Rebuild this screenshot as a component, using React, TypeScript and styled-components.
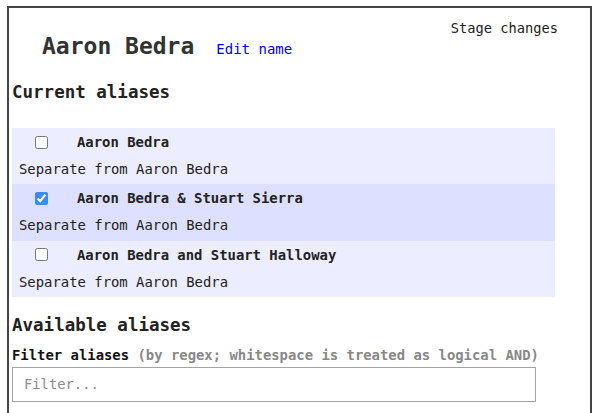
import React, { useState } from 'react'
import styled, { createGlobalStyle } from 'styled-components'

const GlobalStyle = createGlobalStyle`
  html, body {
    margin: 0;
    padding: 0;
    background: #fff;
  }
  body {
    font-family: "DejaVu Sans Mono", "Liberation Mono", monospace;
    font-size: 13.9px;
    color: #222;
  }
`

const Frame = styled.div`
  box-sizing: border-box;
  width: 585px;
  min-height: 420px;
  margin: 6px 0 0 7px;
  padding: 0 3px;
  border: 2px solid #444;
  border-bottom: none;
`

const Header = styled.div`
  display: flex;
  justify-content: space-between;
  align-items: flex-start;
`

const TitleRow = styled.div`
  display: flex;
  align-items: baseline;
  gap: 22px;
  height: 28px;
  margin-top: 24px;
  padding-left: 30px;
`

const Title = styled.h1`
  margin: 0;
  font-size: 23px;
  line-height: 28px;
  font-weight: bold;
  color: #333;
`

const EditLink = styled.a`
  font-size: 14px;
  line-height: 16px;
  color: #0000ee;
  text-decoration: none;
  cursor: pointer;
`

const StageButton = styled.button`
  margin: 12px 29px 0 0;
  padding: 0;
  border: none;
  background: none;
  font-family: inherit;
  font-size: 13.7px;
  line-height: 16px;
  color: #222;
  cursor: pointer;
`

const SectionTitle = styled.h2<{ $top: number; $bottom: number }>`
  margin: ${(p) => p.$top}px 0 ${(p) => p.$bottom}px;
  font-size: 17.5px;
  line-height: 22px;
  font-weight: bold;
  color: #222;
`

const AliasList = styled.div`
  width: 543px;
  display: flex;
  flex-direction: column;
`

const AliasRow = styled.div<{ $selected: boolean }>`
  display: flex;
  flex-direction: column;
  gap: 7px;
  padding: 4px 0 5.33px;
  background: ${(p) => (p.$selected ? '#dde0fe' : '#ecedfe')};
`

const AliasLine = styled.label`
  display: flex;
  align-items: center;
  line-height: 20px;
  cursor: pointer;
`

const Check = styled.input`
  width: 13px;
  height: 13px;
  margin: 0 29px 0 23px;
  accent-color: #3d8af7;
`

const AliasName = styled.span`
  font-weight: bold;
  color: #222;
`

const SeparateText = styled.div`
  padding-left: 7px;
  line-height: 20px;
  color: #222;
`

const FilterLabel = styled.div`
  margin-top: 11px;
  line-height: 17px;
  font-weight: bold;
  color: #111;
`

const Hint = styled.span`
  color: #888;
`

const FilterInput = styled.input`
  box-sizing: border-box;
  display: block;
  width: 524px;
  height: 35px;
  margin-top: 3px;
  padding: 0 11px;
  border: 1px solid #a3a3a3;
  border-radius: 0;
  font-family: inherit;
  font-size: 13.8px;
  color: #222;
  outline: none;
  &::placeholder {
    color: #8a8a8a;
  }
`

const aliases = [
  'Aaron Bedra',
  'Aaron Bedra & Stuart Sierra',
  'Aaron Bedra and Stuart Halloway',
]

export default function App() {
  const [checked, setChecked] = useState<boolean[]>([false, true, false])
  const [filter, setFilter] = useState('')

  const toggle = (i: number) =>
    setChecked((c) => c.map((v, j) => (j === i ? !v : v)))

  return (
    <>
      <GlobalStyle />
      <Frame>
        <Header>
          <TitleRow>
            <Title>Aaron Bedra</Title>
            <EditLink>Edit name</EditLink>
          </TitleRow>
          <StageButton>Stage changes</StageButton>
        </Header>

        <SectionTitle $top={21} $bottom={25}>Current aliases</SectionTitle>
        <AliasList>
          {aliases.map((name, i) => (
            <AliasRow key={name} $selected={checked[i]}>
              <AliasLine>
                <Check type="checkbox" checked={checked[i]} onChange={() => toggle(i)} />
                <AliasName>{name}</AliasName>
              </AliasLine>
              <SeparateText>Separate from Aaron Bedra</SeparateText>
            </AliasRow>
          ))}
        </AliasList>

        <SectionTitle $top={17} $bottom={0}>Available aliases</SectionTitle>
        <FilterLabel>
          Filter aliases <Hint>(by regex; whitespace is treated as logical AND)</Hint>
        </FilterLabel>
        <FilterInput
          placeholder="Filter..."
          value={filter}
          onChange={(e) => setFilter(e.target.value)}
        />
      </Frame>
    </>
  )
}
